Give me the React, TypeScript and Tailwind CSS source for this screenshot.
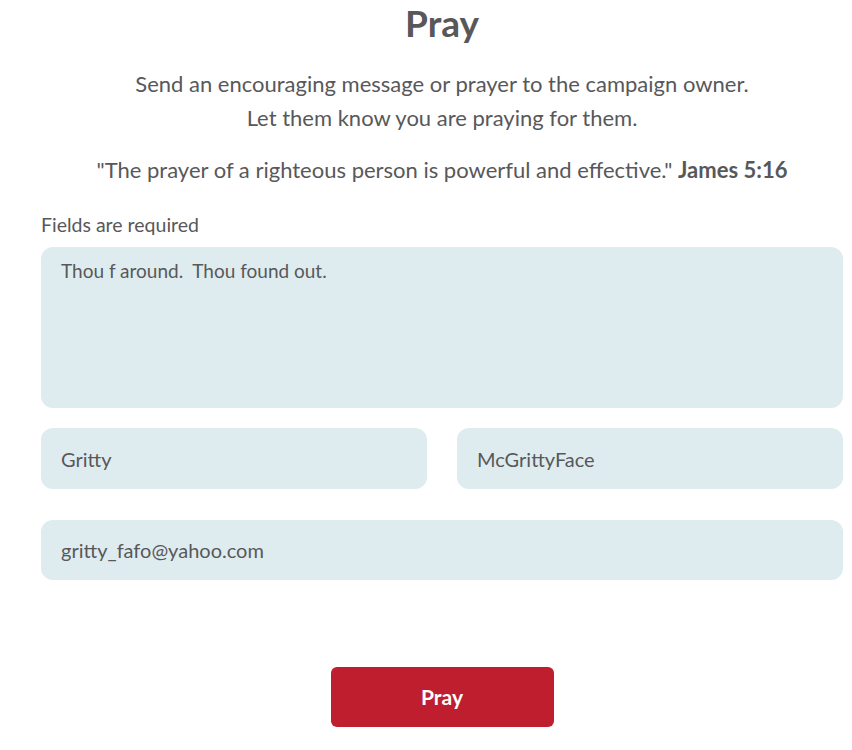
export default function App() {
  return (
    <div className="min-h-screen bg-white text-[#58585a]" style={{ fontFamily: 'Lato, "Liberation Sans", sans-serif' }}>
      <div className="ml-[41px] w-[802px] flex flex-col">
        <h1 className="text-center text-[37px] font-bold leading-[44px] mt-[1px]">Pray</h1>
        <p className="text-center text-[22px] leading-[34px] mt-[22px]">
          Send an encouraging message or prayer to the campaign owner.
          <br />
          Let them know you are praying for them.
        </p>
        <p className="text-center text-[22px] leading-[34px] mt-[18px]">
          "The prayer of a righteous person is powerful and effective." <span className="font-bold">James 5:16</span>
        </p>
        <div className="text-[19.5px] leading-[24px] mt-[26px]">Fields are required</div>
        <textarea
          className="mt-[10px] h-[161px] w-full resize-none rounded-[12px] bg-[#deecef] px-[20px] py-[12px] text-[19px] leading-[24px] text-[#58585a] outline-none"
          defaultValue="Thou f around.  Thou found out."
        />
        <div className="mt-[20px] grid grid-cols-2 gap-[30px]">
          <input className="h-[61px] rounded-[12px] bg-[#deecef] px-[20px] text-[20px] outline-none" defaultValue="Gritty" />
          <input className="h-[61px] rounded-[12px] bg-[#deecef] px-[20px] text-[20px] outline-none" defaultValue="McGrittyFace" />
        </div>
        <input className="mt-[31px] h-[60px] rounded-[12px] bg-[#deecef] px-[20px] text-[20px] outline-none" defaultValue="gritty_fafo@yahoo.com" />
        <div className="mt-[87px] flex justify-center">
          <button className="h-[60px] w-[223px] rounded-[6px] bg-[#be1e2d] text-[21px] font-bold text-white">Pray</button>
        </div>
      </div>
    </div>
  )
}
